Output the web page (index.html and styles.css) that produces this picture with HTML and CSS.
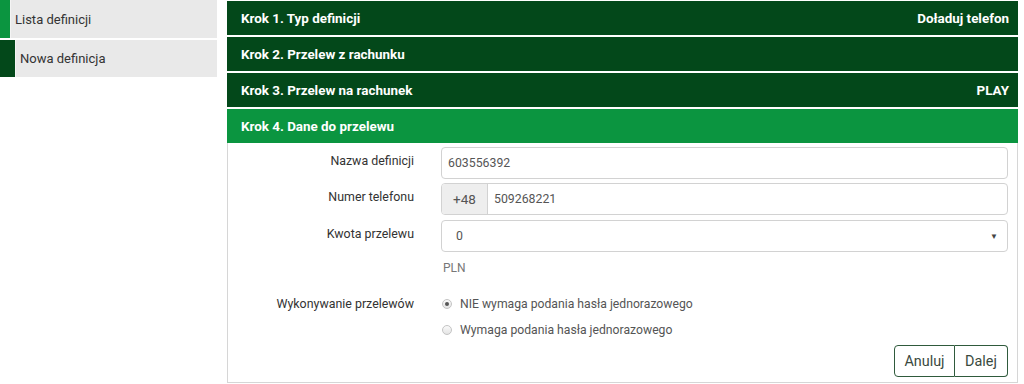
FILE: index.html
```html
<!DOCTYPE html>
<html lang="pl">
<head>
<meta charset="utf-8">
<title>Nowa definicja</title>
<link rel="stylesheet" href="styles.css">
</head>
<body>
<div class="layout">
  <nav class="sidebar">
    <a class="side-item">Lista definicji</a>
    <a class="side-item active">Nowa definicja</a>
  </nav>
  <main class="main">
    <div class="step"><span>Krok 1. Typ definicji</span><span>Doładuj telefon</span></div>
    <div class="step"><span>Krok 2. Przelew z rachunku</span></div>
    <div class="step"><span>Krok 3. Przelew na rachunek</span><span>PLAY</span></div>
    <div class="step current"><span>Krok 4. Dane do przelewu</span></div>
    <div class="panel">
      <div class="row">
        <label class="lbl">Nazwa definicji</label>
        <div class="field"><div class="input">603556392</div></div>
      </div>
      <div class="row">
        <label class="lbl">Numer telefonu</label>
        <div class="field"><div class="input group"><span class="addon">+48</span><span class="val">509268221</span></div></div>
      </div>
      <div class="row">
        <label class="lbl">Kwota przelewu</label>
        <div class="field"><div class="input select"><span class="sel-val">0</span><span class="caret">▼</span></div></div>
      </div>
      <div class="row help-row">
        <span></span>
        <div class="help">PLN</div>
      </div>
      <div class="row radio-row">
        <label class="lbl">Wykonywanie przelewów</label>
        <div class="radios">
          <div class="radio"><span class="dot checked"></span>NIE wymaga podania hasła jednorazowego</div>
          <div class="radio"><span class="dot"></span>Wymaga podania hasła jednorazowego</div>
        </div>
      </div>
      <div class="actions">
        <div class="btn-group"><button class="btn">Anuluj</button><button class="btn">Dalej</button></div>
      </div>
    </div>
  </main>
</div>
</body>
</html>
```
FILE: styles.css
```css
html, body {
  margin: 0;
  padding: 0;
  background: #fff;
}
body {
  font-family: Roboto, "Noto Sans", "Liberation Sans", sans-serif;
  font-size: 13px;
  color: #333;
}
.layout {
  display: flex;
  gap: 10px;
  align-items: flex-start;
}
.sidebar {
  width: 217px;
  display: flex;
  flex-direction: column;
  gap: 2px;
}
.side-item {
  display: flex;
  align-items: center;
  height: 38px;
  background: #e9e9e9;
  border-left: 10px solid #0b9540;
  box-shadow: inset 1px 0 0 #f4f4f4;
  padding-left: 5px;
  color: #333;
  font-size: 13px;
}
.side-item.active {
  height: 37px;
  border-left: 15px solid #03481a;
}
.main {
  width: 791px;
  padding-top: 1px;
  display: flex;
  flex-direction: column;
  gap: 2px;
}
.step {
  height: 34px;
  background: #03481a;
  color: #fff;
  font-weight: 700;
  font-size: 13.4px;
  display: flex;
  align-items: center;
  justify-content: space-between;
  padding: 0 9px 0 14px;
}
.step.current {
  background: #0b9540;
}
.panel {
  margin-top: -2px;
  border: 1px solid #d6d6d6;
  border-top: none;
  padding: 4px 9px 5px 0;
}
.row {
  display: grid;
  grid-template-columns: 200px 1fr;
  column-gap: 13px;
  align-items: center;
  margin-bottom: 4px;
}
.row + .row {
  margin-bottom: 5px;
}
.lbl {
  text-align: right;
  padding-right: 14px;
  color: #333;
  font-size: 12.4px;
  margin-top: -5px;
}
.input {
  height: 30px;
  border: 1px solid #d2d2d2;
  border-radius: 4px;
  display: flex;
  align-items: center;
  padding: 0 6px;
  color: #555;
  font-size: 12.3px;
  background: #fff;
}
.input.group {
  padding: 0;
  overflow: hidden;
}
.addon {
  width: 45px;
  height: 100%;
  background: #eee;
  border-right: 1px solid #d2d2d2;
  display: flex;
  align-items: center;
  justify-content: center;
  color: #555;
  font-size: 13.5px;
}
.val {
  padding-left: 6px;
}
.select {
  justify-content: space-between;
  padding: 0 9px 0 14px;
}
.caret {
  font-size: 8px;
  color: #444;
}
.help-row {
  margin-bottom: 0;
}
.help {
  height: 22px;
  line-height: 22px;
  color: #777;
  font-size: 12px;
  padding-left: 2px;
}
.radio-row {
  align-items: start;
  margin-top: 15px;
}
.radio-row .lbl {
  margin-top: 0;
  line-height: 20px;
}
.radios {
  display: flex;
  flex-direction: column;
  gap: 6px;
}
.radio {
  display: flex;
  align-items: center;
  height: 20px;
  color: #555;
  font-size: 12.2px;
}
.dot {
  width: 10px;
  height: 10px;
  border-radius: 50%;
  border: 1px solid #c4c4c4;
  background: linear-gradient(#fafafa, #e4e4e4);
  margin: 0 8px 0 1px;
  box-sizing: border-box;
  position: relative;
}
.dot.checked::after {
  content: "";
  position: absolute;
  left: 2px;
  top: 2px;
  width: 4px;
  height: 4px;
  border-radius: 50%;
  background: #555;
}
.actions {
  display: flex;
  justify-content: flex-end;
  margin-top: 5px;
}
.btn-group {
  display: flex;
}
.btn {
  height: 32px;
  border: 1px solid #2f5a3c;
  background: #fff;
  color: #3a4a3e;
  font-family: inherit;
  font-size: 14.4px;
  padding: 0;
  cursor: pointer;
}
.btn:first-child {
  border-radius: 4px 0 0 4px;
  width: 61px;
}
.btn:last-child {
  border-left: none;
  border-radius: 0 4px 4px 0;
  width: 53px;
}
```
